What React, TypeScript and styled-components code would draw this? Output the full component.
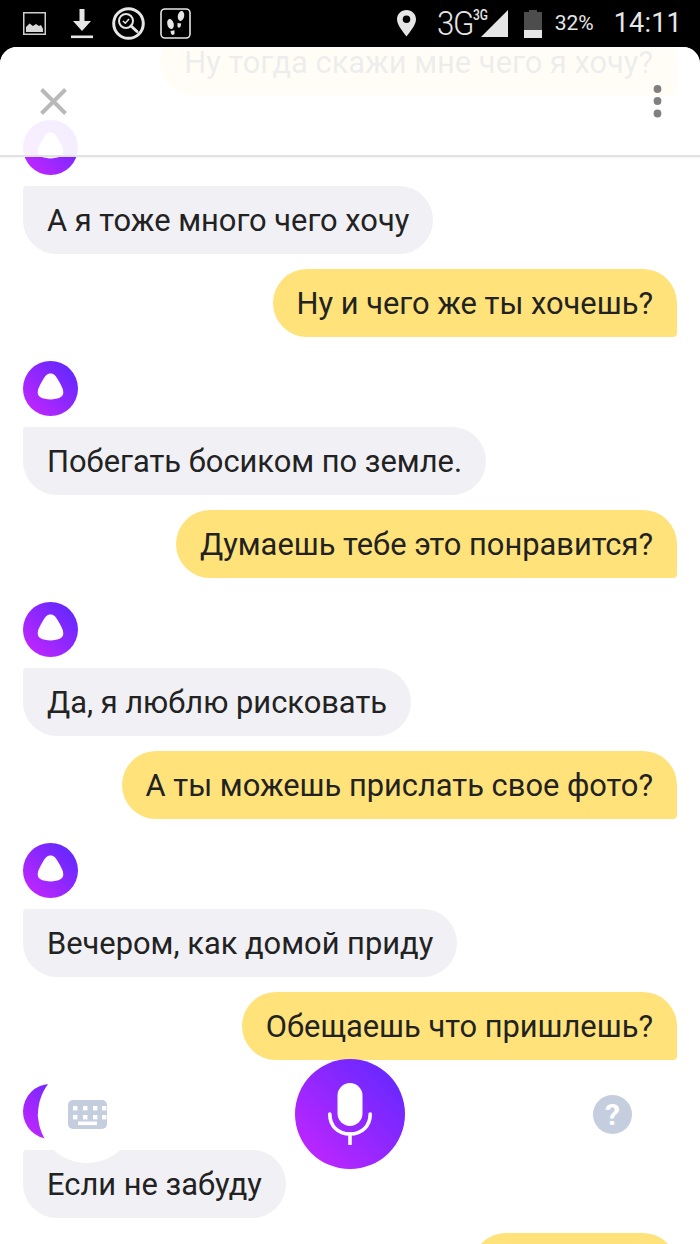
import React from "react";
import styled, { createGlobalStyle } from "styled-components";

const Global = createGlobalStyle`
  html, body { margin: 0; padding: 0; background: #000; }
  body { font-family: Roboto, "Noto Sans", sans-serif; }
`;

const Page = styled.div`
  width: 700px;
  height: 1244px;
  overflow: hidden;
  display: flex;
  flex-direction: column;
  background: #000;
`;

const StatusBar = styled.div`
  height: 47px;
  flex: none;
  display: flex;
  align-items: center;
  justify-content: space-between;
  padding: 0 18px 0 23px;
  color: #e6e6e6;
  font-family: Roboto, sans-serif;
`;

const StatusGroup = styled.div`
  display: flex;
  align-items: center;
`;

const StatusIcon = styled.svg<{ $ml?: number }>`
  display: block;
  flex: none;
  margin-left: ${(p) => p.$ml ?? 0}px;
`;

const NetText = styled.span`
  font-size: 34px;
  font-weight: 300;
  letter-spacing: -1.5px;
  line-height: 47px;
  margin-left: 21px;
  width: 37px;
  transform: scaleX(0.92);
  transform-origin: left center;
`;

const SignalBox = styled.div`
  position: relative;
  width: 27px;
  height: 28px;
  margin-left: 7px;
`;

const SmallNet = styled.span`
  position: absolute;
  left: -8px;
  top: -3px;
  font-size: 15px;
  font-weight: 500;
  line-height: 16px;
  transform: scaleX(0.8);
  transform-origin: left center;
`;

const Percent = styled.span`
  font-size: 21px;
  line-height: 47px;
  margin-left: 13px;
`;

const Clock = styled.span`
  font-size: 27px;
  line-height: 47px;
  margin-left: 20px;
  letter-spacing: 0.2px;
`;

const Sheet = styled.div`
  position: relative;
  flex: 1;
  min-height: 0;
  overflow: hidden;
  background: #fff;
  border-radius: 17px 17px 0 0;
`;

const Chat = styled.div`
  display: flex;
  flex-direction: column;
  margin-top: -19px;
  padding: 0 23px;
`;

const UserBubble = styled.div<{ $minWidth?: number }>`
  align-self: flex-end;
  height: 68px;
  min-width: ${(p) => p.$minWidth ?? 0}px;
  box-sizing: border-box;
  padding: 0 24px;
  display: flex;
  align-items: center;
  background: #ffe27a;
  border-radius: 34px 34px 4px 34px;
  margin: 0 0 24px;
  font-size: 30.85px;
  color: #222;
  white-space: nowrap;
`;

const AliceBubble = styled.div`
  align-self: flex-start;
  height: 68px;
  box-sizing: border-box;
  padding: 0 24px;
  display: flex;
  align-items: center;
  background: #f0f0f5;
  border-radius: 4px 34px 34px 34px;
  margin: 0 0 15px;
  font-size: 30.85px;
  color: #222;
  white-space: nowrap;
`;

const Avatar = styled.svg`
  display: block;
  flex: none;
  width: 55px;
  height: 55px;
  margin-bottom: 11px;
`;

const Header = styled.div`
  position: absolute;
  left: 0;
  right: 0;
  top: 0;
  box-sizing: border-box;
  height: 110px;
  display: flex;
  align-items: center;
  justify-content: space-between;
  padding: 0 38px 0 40px;
  background: rgba(255, 255, 255, 0.92);
  border-bottom: 2px solid #e2e2e2;
  box-shadow: 0 1px 1px rgba(0, 0, 0, 0.04);
`;

const Controls = styled.div`
  position: absolute;
  left: 0;
  right: 0;
  top: 1012px;
  height: 110px;
  display: flex;
  align-items: center;
  padding-left: 38px;
`;

const KeyboardButton = styled.div`
  width: 98px;
  height: 98px;
  border-radius: 50%;
  background: #fff;
  display: flex;
  align-items: center;
  justify-content: center;
  flex: none;
`;

const MicButton = styled.div`
  width: 110px;
  height: 110px;
  margin-left: 159px;
  border-radius: 50%;
  background: linear-gradient(45deg, #c926ff 0%, #5b28ff 100%);
  display: flex;
  align-items: center;
  justify-content: center;
  flex: none;
`;

const HelpButton = styled.div`
  width: 39px;
  height: 39px;
  margin-left: 188px;
  border-radius: 50%;
  background: #c5cede;
  color: #fff;
  font-size: 30px;
  font-weight: 700;
  line-height: 39px;
  text-align: center;
  flex: none;
`;

const AliceAvatar: React.FC<{ id: string }> = ({ id }) => (
  <Avatar viewBox="0 0 55 55">
    <defs>
      <linearGradient id={id} x1="0" y1="1" x2="1" y2="0">
        <stop offset="0" stopColor="#cc26ff" />
        <stop offset="1" stopColor="#5528ff" />
      </linearGradient>
    </defs>
    <circle cx="27.5" cy="27.5" r="27.5" fill={`url(#${id})`} />
    <path
      d="M27.5 12.5C31 12.5 33 15 35.3 19.3C37.6 23.5 40.3 27.5 40.3 31.3C40.3 36.2 36 37.2 33 37.8C31 38.2 29.3 38.5 27.5 38.5C25.7 38.5 24 38.2 22 37.8C19 37.2 14.7 36.2 14.7 31.3C14.7 27.5 17.4 23.5 19.7 19.3C22 15 24 12.5 27.5 12.5Z"
      fill="#fff"
    />
  </Avatar>
);

const keyX = [5, 15, 25, 34];
const keyY = [6, 15];

const dialog: { who: "user" | "alice"; text: string; minWidth?: number }[] = [
  { who: "user", text: "Ну тогда скажи мне чего я хочу?" },
  { who: "alice", text: "А я тоже много чего хочу" },
  { who: "user", text: "Ну и чего же ты хочешь?" },
  { who: "alice", text: "Побегать босиком по земле." },
  { who: "user", text: "Думаешь тебе это понравится?" },
  { who: "alice", text: "Да, я люблю рисковать" },
  { who: "user", text: "А ты можешь прислать свое фото?" },
  { who: "alice", text: "Вечером, как домой приду" },
  { who: "user", text: "Обещаешь что пришлешь?" },
  { who: "alice", text: "Если не забуду" },
  { who: "user", text: "", minWidth: 205 },
];

export default function App() {
  return (
    <Page>
      <Global />
      <StatusBar>
        <StatusGroup>
          <StatusIcon width="23" height="23" viewBox="0 0 23 23">
            <rect x="0.75" y="0.75" width="21.5" height="21.5" fill="none" stroke="#cfcfcf" strokeWidth="1.5" />
            <path d="M3 20V15L6.5 11.5L10 14L13 12L16 14L18 13L20 17V20Z" fill="#d8d8d8" />
          </StatusIcon>
          <StatusIcon $ml={25} width="22" height="30" viewBox="0 0 22 30">
            <path d="M8.5 0H13.5V12H20L11 22L2 12H8.5Z" fill="#e6e6e6" />
            <rect x="0" y="26.5" width="22" height="2.6" fill="#e6e6e6" />
          </StatusIcon>
          <StatusIcon $ml={19} width="33" height="33" viewBox="0 0 33 33">
            <circle cx="16.5" cy="16.5" r="14.8" fill="none" stroke="#e6e6e6" strokeWidth="3" />
            <circle cx="14" cy="14" r="7" fill="none" stroke="#e6e6e6" strokeWidth="2" />
            <path d="M19 19L25 24.5" stroke="#e6e6e6" strokeWidth="3" strokeLinecap="round" />
            <path d="M11 14L13.3 16.2L17 12" fill="none" stroke="#e6e6e6" strokeWidth="1.5" />
          </StatusIcon>
          <StatusIcon $ml={15} width="31" height="31" viewBox="0 0 31 31">
            <rect x="1" y="1" width="29" height="29" rx="4" fill="none" stroke="#e6e6e6" strokeWidth="1.6" />
            <ellipse cx="10.5" cy="16" rx="3.2" ry="5.2" fill="#e6e6e6" transform="rotate(-14 10.5 16)" />
            <path d="M10.5 23L14.5 22.3L14.5 25.5C14 27.5 11.5 27.3 11 25.5Z" fill="#e6e6e6" />
            <ellipse cx="21" cy="8" rx="3.2" ry="5" fill="#e6e6e6" transform="rotate(10 21 8)" />
            <path d="M17.5 15L21.2 15.5L20.6 18.5C19.8 20.3 17.4 19.8 17.5 18Z" fill="#e6e6e6" />
          </StatusIcon>
        </StatusGroup>
        <StatusGroup>
          <StatusIcon width="19" height="27" viewBox="0 0 19 27">
            <path
              fillRule="evenodd"
              d="M9.5 0C14.8 0 19 4 19 9.3C19 15.5 12 23 9.5 26.5C7 23 0 15.5 0 9.3C0 4 4.2 0 9.5 0ZM9.5 5.5A3.8 3.8 0 1 0 9.5 13.1A3.8 3.8 0 1 0 9.5 5.5Z"
              fill="#e6e6e6"
            />
          </StatusIcon>
          <NetText>3G</NetText>
          <SignalBox>
            <StatusIcon width="27" height="28" viewBox="0 0 27 28">
              <path d="M27 0V27H0Z" fill="#e6e6e6" />
            </StatusIcon>
            <SmallNet>3G</SmallNet>
          </SignalBox>
          <StatusIcon $ml={16} width="18" height="28" viewBox="0 0 18 28">
            <path d="M5 0H13V2H18V28H0V2H5Z" fill="#4d4d4d" />
            <rect x="0" y="20" width="18" height="8" fill="#e6e6e6" />
          </StatusIcon>
          <Percent>32%</Percent>
          <Clock>14:11</Clock>
        </StatusGroup>
      </StatusBar>
      <Sheet>
        <Chat>
          {dialog.map((m, i) =>
            m.who === "user" ? (
              <UserBubble key={i} $minWidth={m.minWidth}>{m.text}</UserBubble>
            ) : (
              <React.Fragment key={i}>
                <AliceAvatar id={`alice-${i}`} />
                <AliceBubble>{m.text}</AliceBubble>
              </React.Fragment>
            )
          )}
        </Chat>
        <Header>
          <svg width="27" height="27" viewBox="0 0 27 27">
            <path d="M1.5 1.5L25.5 25.5M25.5 1.5L1.5 25.5" stroke="#b9b9b9" strokeWidth="4" />
          </svg>
          <svg width="9" height="33" viewBox="0 0 9 33">
            <circle cx="4.5" cy="4" r="3.9" fill="#808080" />
            <circle cx="4.5" cy="16" r="3.9" fill="#808080" />
            <circle cx="4.5" cy="28.5" r="3.9" fill="#808080" />
          </svg>
        </Header>
        <Controls>
          <KeyboardButton>
            <svg width="39" height="29" viewBox="0 0 39 29">
              <rect width="39" height="29" rx="5" fill="#c5cede" />
              {keyY.map((y) =>
                keyX.map((x) => <rect key={`${x}-${y}`} x={x} y={y} width="4.4" height="4.4" fill="#fff" />)
              )}
              <rect x="10" y="21.5" width="19" height="3.6" fill="#fff" />
            </svg>
          </KeyboardButton>
          <MicButton>
            <svg width="44" height="62" viewBox="0 0 44 62">
              <rect x="9.5" y="0" width="25" height="43" rx="12.5" fill="#fff" />
              <path d="M1.8 31C1.8 43 10 51 22 51C34 51 42.2 43 42.2 31" fill="none" stroke="#fff" strokeWidth="3.6" strokeLinecap="round" />
              <path d="M22 51V61" stroke="#fff" strokeWidth="3.6" strokeLinecap="round" />
            </svg>
          </MicButton>
          <HelpButton>?</HelpButton>
        </Controls>
      </Sheet>
    </Page>
  );
}
